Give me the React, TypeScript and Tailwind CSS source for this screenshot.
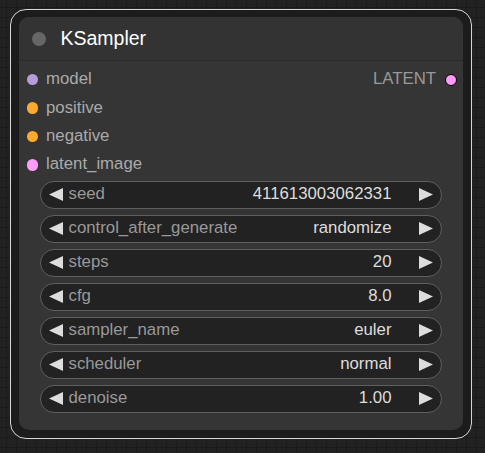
const inputs = [
  { name: "model", color: "#b39ddb" },
  { name: "positive", color: "#ffa931" },
  { name: "negative", color: "#ffa931" },
  { name: "latent_image", color: "#ff9cf9" },
];

const widgets = [
  { label: "seed", value: "411613003062331" },
  { label: "control_after_generate", value: "randomize" },
  { label: "steps", value: "20" },
  { label: "cfg", value: "8.0" },
  { label: "sampler_name", value: "euler" },
  { label: "scheduler", value: "normal" },
  { label: "denoise", value: "1.00" },
];

function Arrow({ dir }: { dir: "left" | "right" }) {
  return (
    <svg width="14" height="13" viewBox="0 0 14 13" className="shrink-0">
      {dir === "left" ? <polygon points="14,0 14,13 0,6.5" fill="#dddddd" /> : <polygon points="0,0 0,13 14,6.5" fill="#dddddd" />}
    </svg>
  );
}

function Widget({ label, value }: { label: string; value: string }) {
  return (
    <div className="flex h-[28px] items-center rounded-full border border-[#5f5f5f] bg-[#222222] pl-[8px] pr-[8px]">
      <Arrow dir="left" />
      <span className="ml-[6px] flex-1 text-[#999999]">{label}</span>
      <span className="mr-[27px] text-[#dddddd]">{value}</span>
      <Arrow dir="right" />
    </div>
  );
}

export default function App() {
  return (
    <div className="h-[453px] w-[485px] overflow-hidden bg-[#222222] bg-[linear-gradient(#1b1b1b_1px,transparent_1px),linear-gradient(90deg,#1b1b1b_1px,transparent_1px)] bg-[size:10px_10px] bg-[position:-4px_-3px] pl-[10px] pt-[9px] font-['Liberation_Sans',Arial,sans-serif] text-[16.8px] leading-none">
      <div className="h-[430px] w-[462px] rounded-[16px] border-[1.5px] border-[#d6d6d6] bg-[#1c1c1c] pl-[7.5px] pt-[6.5px]">
        <div className="h-[413px] w-[444px] overflow-hidden rounded-[10px] bg-[#353535]">
          {/* title */}
          <div className="flex h-[44px] items-center border-b border-[#2b2b2b] bg-[#333333] pl-[13px] pt-[1.5px]">
            <div className="size-[14.5px] rounded-full bg-[#666666]" />
            <span className="ml-[14.5px] text-[19.5px] text-white">KSampler</span>
          </div>

          <div className="relative pt-[5px]">
            {inputs.map((s) => (
              <div key={s.name} className="flex h-[28.4px] items-center pl-[8px]">
                <div className="size-[11.5px] rounded-full" style={{ background: s.color }} />
                <span className="ml-[8px] text-[#aaaaaa]">{s.name}</span>
              </div>
            ))}
            <div className="absolute right-[6px] top-[5px] flex h-[28.4px] items-center">
              <span className="text-[#999999]">LATENT</span>
              <div className="ml-[8.5px] size-[12px] rounded-full border border-black bg-[#ff9cf9]" />
            </div>
          </div>

          <div className="mx-[21px] mt-[1.5px] flex flex-col gap-[6px]">
            {widgets.map((w) => (
              <Widget key={w.label} label={w.label} value={w.value} />
            ))}
          </div>
        </div>
      </div>
    </div>
  );
}
